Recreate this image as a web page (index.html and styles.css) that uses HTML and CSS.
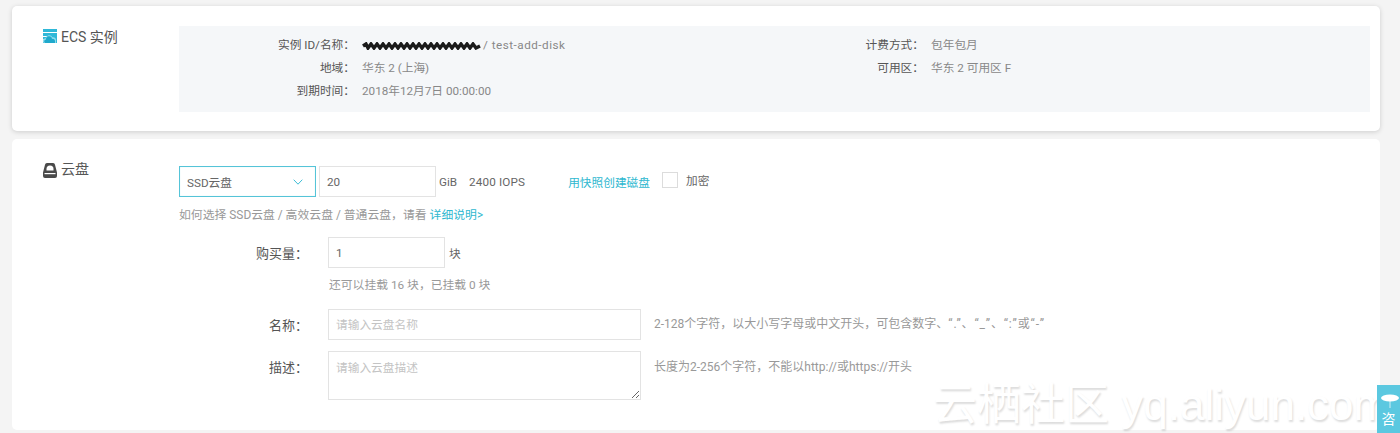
FILE: index.html
```html
<!DOCTYPE html>
<html lang="zh-CN">
<head>
<meta charset="utf-8">
<title>ECS 云盘</title>
<link rel="stylesheet" href="styles.css">
</head>
<body>
<main class="page">
  <section class="card card-ecs">
    <h2 class="section-title">
      <svg class="icon" viewBox="0 0 14 14" width="14" height="14"><rect width="14" height="14" fill="#2fb8d8"/><path d="M0 3.500h14M0 7.500h5.500M0 10.500h2.500" stroke="#fff" stroke-width="1.200" fill="none"/><path d="M1 14a2.600 2.600 0 0 1 1.500-4.800a3.800 3.800 0 0 1 7-1a2.900 2.900 0 0 1 3.500 2.800v3z" fill="#8fdcec"/><path d="M2 14a2 2 0 0 1 1-3.600a3 3 0 0 1 6-.5a2.300 2.300 0 0 1 3 2.200v1.900z" fill="#1fa9cc"/></svg>
      <span>ECS 实例</span>
    </h2>
    <div class="info-panel">
      <div class="info-col info-left">
        <div class="info-row"><span class="info-label">实例 ID/名称：</span><span class="info-value"><svg class="scribble" viewBox="0 0 120 8" width="120" height="8"><path d="M1 4 4 2 6 6 9 2 12 6 15 2 18 6 21 2 24 6 27 2 30 6 33 2 36 6 39 2 42 6 45 2 48 6 51 2 54 6 57 2 60 6 63 2 66 6 69 2 72 6 75 2 78 6 81 2 84 6 87 2 90 6 93 2 96 6 99 2 102 6 105 2 108 6 111 2 114 6 118 4" fill="none" stroke="#1b1b1b" stroke-width="3.400"/></svg><span class="disk-name">/ test-add-disk</span></span></div>
        <div class="info-row"><span class="info-label">地域：</span><span class="info-value">华东 2 (上海)</span></div>
        <div class="info-row"><span class="info-label">到期时间：</span><span class="info-value">2018年12月7日 00:00:00</span></div>
      </div>
      <div class="info-col info-right">
        <div class="info-row"><span class="info-label">计费方式：</span><span class="info-value">包年包月</span></div>
        <div class="info-row"><span class="info-label">可用区：</span><span class="info-value">华东 2 可用区 F</span></div>
      </div>
    </div>
  </section>

  <section class="card card-disk">
    <h2 class="section-title">
      <svg class="icon" viewBox="0 0 14 15" width="14" height="15"><path d="M4 0h6a2 2 0 0 1 2 1.700L14 9.500V13a2 2 0 0 1-2 2H2a2 2 0 0 1-2-2V9.500l2-7.800A2 2 0 0 1 4 0z" fill="#4a4a4a"/><path d="M3.500 7.500V6a3.500 3.500 0 0 1 7 0v1.500z" fill="#fff"/><rect x="1.500" y="10" width="11" height="1.200" fill="#fff"/></svg>
      <span>云盘</span>
    </h2>
    <div class="disk-body">
      <div class="disk-type-row">
        <div class="select"><span>SSD云盘</span><svg viewBox="0 0 10 6" width="10" height="6"><path d="M.7.700 5 5.200 9.300.700" fill="none" stroke="#3dbdd6" stroke-width="1"/></svg></div>
        <input class="field field-size" type="text" value="20">
        <span class="unit">GiB</span>
        <span class="iops">2400 IOPS</span>
        <a class="link snapshot" href="#">用快照创建磁盘</a>
        <span class="checkbox"></span>
        <span class="encrypt">加密</span>
      </div>
      <p class="hint type-hint">如何选择 SSD云盘 / 高效云盘 / 普通云盘，请看 <a class="link" href="#">详细说明&gt;</a></p>

      <div class="form-row row-qty">
        <label class="form-label">购买量：</label>
        <div class="form-control">
          <div class="inline"><input class="field field-size" type="text" value="1"><span class="unit unit-block">块</span></div>
          <p class="hint qty-hint">还可以挂载 16 块，已挂载 0 块</p>
        </div>
      </div>
      <div class="form-row row-name">
        <label class="form-label">名称：</label>
        <input class="field field-wide field-name" type="text" placeholder="请输入云盘名称">
        <span class="hint side-hint">2-128个字符，以大小写字母或中文开头，可包含数字、<span class="quoted">“.”、“_”、“:”或“-”</span></span>
      </div>
      <div class="form-row row-desc">
        <label class="form-label">描述：</label>
        <textarea class="field field-wide area" placeholder="请输入云盘描述"></textarea>
        <span class="hint side-hint">长度为2-256个字符，不能以http://或https://开头</span>
      </div>
    </div>
  </section>
</main>
<div class="watermark">云栖社区 yq.aliyun.com</div>
<div class="consult">
  <svg viewBox="0 0 18 14" width="18" height="14"><path d="M8 5h2v9H8z" fill="#fff" opacity=".35"/><ellipse cx="9" cy="4" rx="9" ry="3.500" fill="#fff"/></svg>
  <span>咨</span>
</div>
</body>
</html>
```

FILE: styles.css
```css
* { box-sizing: border-box; }
html, body { margin: 0; height: 433px; overflow: hidden; }
body {
  background: #f4f4f4;
  font-family: "Roboto", "Liberation Sans", "Noto Sans CJK SC", sans-serif;
  font-size: 11.7px;
  color: #666;
  position: relative;
}
.page { padding: 6px 20px 0 12px; display: flex; flex-direction: column; gap: 8px; }
.card {
  background: #fff;
  border-radius: 5px;
  display: flex;
  padding-left: 31px;
}
.card-ecs { height: 125px; padding-top: 20px; box-shadow: 0 1px 5px rgba(0,0,0,.16); }
.card-disk { height: 291px; padding-top: 21px; }
.section-title {
  margin: 0;
  width: 136px;
  flex: none;
  display: flex;
  align-items: flex-start;
  gap: 4px;
  font-size: 14px;
  font-weight: 400;
  line-height: 20px;
  color: #555;
}
.card-ecs .section-title span { margin-top: 1px; }
.card-disk .section-title span { margin-top: -1px; }
.icon { margin-top: 3px; flex: none; }
.info-panel {
  width: 1191px;
  height: 86px;
  background: #f5f7f9;
  padding-top: 8px;
  display: flex;
}
.info-col { display: flex; flex-direction: column; }
.info-left { width: 569px; }
.info-row { height: 23px; line-height: 23px; display: flex; }
.info-label { width: 176px; text-align: right; color: #555; flex: none; font-family: "Roboto", "Noto Sans CJK TC", sans-serif; }
.info-value { padding-left: 7px; color: #888; white-space: nowrap; display: flex; align-items: center; gap: 1px; }
.disk-name { letter-spacing: .5px; }
.disk-body { flex: 1; display: flex; flex-direction: column; margin-top: 6px; }
.disk-type-row { display: flex; align-items: center; height: 31px; }
.select {
  width: 137px;
  height: 31px;
  border: 1px solid #55c4d8;
  display: flex;
  align-items: center;
  justify-content: space-between;
  padding: 0 12px 0 7px;
  color: #666;
  box-shadow: inset 0 0 1px #b5e4ec;
}
.field {
  border: 1px solid #e3e3e3;
  background: #fff;
  font: inherit;
  color: #666;
  outline: none;
  padding: 0 7px;
  display: block;
}
.field::placeholder { color: #c4c4c4; opacity: 1; }
.field-size { width: 117px; height: 31px; margin-left: 3px; }
.inline .field-size { margin-left: 0; }
.unit { margin-left: 3px; color: #666; }
.unit-block { margin-left: 4px; }
.iops { margin-left: 12px; color: #666; letter-spacing: .15px; }
.snapshot { margin-left: 43px; }
.link { color: #2fb8d0; text-decoration: none; }
.checkbox { width: 16px; height: 16px; border: 1px solid #dcdcdc; margin-left: 12px; margin-top: -4px; }
.encrypt { margin-left: 8px; margin-top: -4px; }
.hint { color: #999; margin: 0; }
.type-hint { margin-top: 10px; line-height: 16px; font-size: 11.85px; }
.form-row { display: flex; align-items: flex-start; }
.form-label { width: 129px; text-align: right; color: #555; font-size: 13px; line-height: 33px; flex: none; font-family: "Roboto", "Noto Sans CJK TC", sans-serif; }
.form-control { margin-left: 20px; }
.form-label + .field { margin-left: 20px; }
.inline { display: flex; align-items: center; }
.row-qty { margin-top: 14px; }
.qty-hint { margin-top: 9px; line-height: 16px; padding-left: 1px; font-size: 11.8px; }
.row-name { margin-top: 16px; }
.row-desc { margin-top: 9px; }
.field-wide { width: 313px; height: 31px; flex: none; }
.field-name { padding-top: 1px; }
.area { height: 49px; padding: 6px 7px; resize: vertical; }
.side-hint { margin-left: 13px; line-height: 30px; white-space: nowrap; font-size: 12px; }
.row-desc .side-hint { line-height: 33px; }
.quoted { letter-spacing: .85px; }
.watermark {
  position: absolute;
  left: 933px;
  top: 381px;
  font-family: "Liberation Sans", "Noto Sans CJK SC", sans-serif;
  font-size: 44px;
  line-height: 48px;
  white-space: nowrap;
  color: #fff;
  text-shadow: 1px 2px 2px rgba(0,0,0,.14);
  pointer-events: none;
}
.consult {
  position: absolute;
  left: 1377px;
  top: 385px;
  width: 23px;
  height: 48px;
  background: #5bc8e0;
  color: #fff;
  font-size: 14px;
  display: flex;
  flex-direction: column;
  align-items: center;
  padding-top: 9px;
  padding-left: 3px;
}
.consult span { margin-top: 3px; line-height: 16px; margin-left: -3px; }
.consult svg { flex: none; }
```
